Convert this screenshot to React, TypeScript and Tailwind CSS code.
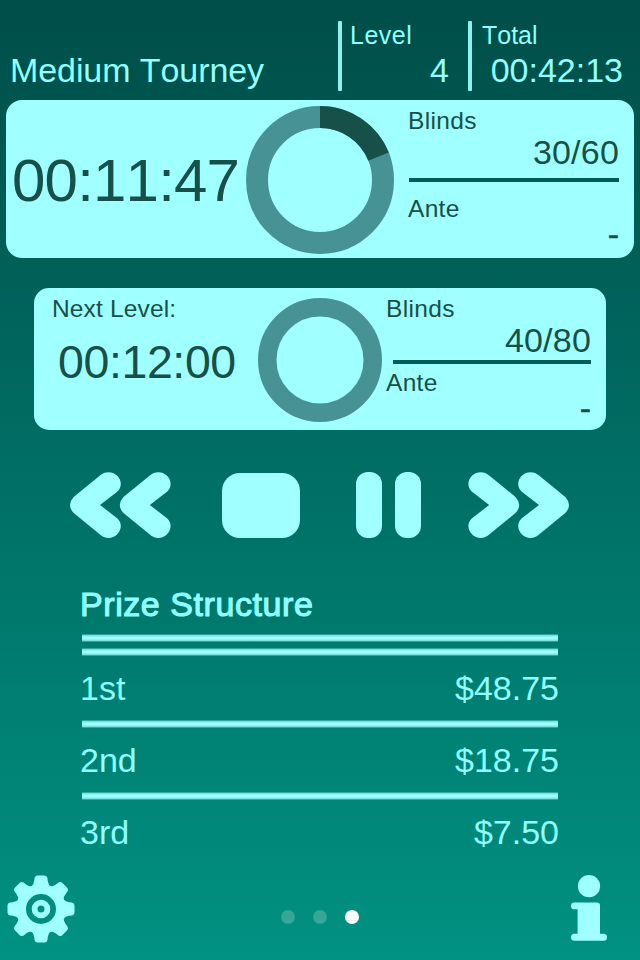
const SOFT_LINE =
  "bg-[linear-gradient(to_bottom,rgba(160,255,255,0.3)_0px,rgba(160,255,255,0.3)_1px,rgba(160,255,255,0.78)_1px,rgba(160,255,255,0.78)_2px,#a0ffff_3px,#a0ffff_5px,rgba(160,255,255,0.78)_6px,rgba(160,255,255,0.78)_7px,rgba(160,255,255,0.3)_7px)]";

function Donut({ size, thickness, progress }: { size: number; thickness: number; progress: number }) {
  const r = (size - thickness) / 2;
  const c = size / 2;
  const length = 2 * Math.PI * r;
  return (
    <svg width={size} height={size} className="block shrink-0" fill="none" strokeWidth={thickness}>
      <circle cx={c} cy={c} r={r} stroke="#469294" />
      {progress > 0 && (
        <circle
          cx={c}
          cy={c}
          r={r}
          stroke="#174f49"
          strokeDasharray={`${length * progress} ${length}`}
          transform={`rotate(-90 ${c} ${c})`}
        />
      )}
    </svg>
  );
}

const CHEVRON =
  "M30 3.5C34.500 -1 42.500 -1 47 3.500C52 8.500 52 15 47.500 19.500L30 33L47.500 46.500C52 51 52 57.500 47 62.500C42.500 67 34.500 67 30 62.500L3.700 41Q-3.700 33 3.700 25Z";

function Chevrons({ flip = false }: { flip?: boolean }) {
  return (
    <svg width="101" height="66" viewBox="0 0 101 66" fill="#a0ffff" className="block shrink-0">
      <g transform={flip ? "translate(101 0) scale(-1 1)" : undefined}>
        <path d={CHEVRON} />
        <path d={CHEVRON} transform="translate(49.8 0)" />
      </g>
    </svg>
  );
}

function Gear() {
  return (
    <svg width="68" height="68" viewBox="-34 -34 68 68" fill="#a0ffff" className="block">
      {[0, 45, 90, 135, 180, 225, 270, 315].map((a) => (
        <path
          key={a}
          transform={`rotate(${a})`}
          d="M-9.500 -22Q-7.200 -25 -6.800 -28L-6.400 -31Q-6 -33.500 -3.500 -33.500H3.500Q6 -33.500 6.400 -31L6.800 -28Q7.200 -25 9.500 -22Z"
        />
      ))}
      <path
        fillRule="evenodd"
        d="M-25 0A25 25 0 1 1 25 0A25 25 0 1 1 -25 0ZM-15 0A15 15 0 1 0 15 0A15 15 0 1 0 -15 0Z"
      />
      <circle r="6.400" fill="none" stroke="#a0ffff" strokeWidth="5.800" />
    </svg>
  );
}

function Info() {
  return (
    <svg width="36" height="66" viewBox="0 0 36 66" fill="#a0ffff" className="block">
      <circle cx="18" cy="11.200" r="11.100" />
      <path d="M3.400 27.500H26Q29 27.500 29 30.500V58.700H32.500A3.500 3.500 0 0 1 32.500 65.700H3.500A3.500 3.500 0 0 1 3.500 58.700H6.600V34.300H3.400A3.400 3.400 0 0 1 3.400 27.500Z" />
    </svg>
  );
}

const prizes = [
  { place: "1st", amount: "$48.75" },
  { place: "2nd", amount: "$18.75" },
  { place: "3rd", amount: "$7.50" },
];

export default function App() {
  return (
    <main className="flex h-[960px] w-[640px] flex-col overflow-hidden bg-linear-to-b from-[#004e49] to-[#009282] font-['Liberation_Sans',Arial,sans-serif] leading-none whitespace-nowrap text-[#92ffff] [font-kerning:none]">
      <header className="flex h-[100px] shrink-0">
        <h1 className="w-[338px] pt-[53px] pl-[10px] text-[34px] tracking-[-0.08px]">Medium Tourney</h1>
        <div className="mt-[21px] h-[70px] w-1 rounded-[1px] bg-[#8ff0ee]" />
        <div className="w-[126px] pt-[23px] pr-[19px] pl-[8px]">
          <div className="text-[25px] tracking-[0.5px]">Level</div>
          <div className="mt-[5px] text-right text-[34px]">4</div>
        </div>
        <div className="mt-[21px] h-[70px] w-1 rounded-[1px] bg-[#8ff0ee]" />
        <div className="grow pt-[23px] pr-[17px] pl-[10px]">
          <div className="text-[25px]">Total</div>
          <div className="mt-[5px] text-right text-[34px]">00:42:13</div>
        </div>
      </header>

      <section className="mx-[6px] flex h-[158px] shrink-0 rounded-[16px] bg-[#a0ffff] text-[#174f49]">
        <div className="w-[240px] pt-[51px] pl-[6px] text-[60px] tracking-[-0.8px]">00:11:47</div>
        <div className="pt-[6px]">
          <Donut size={148} thickness={22} progress={0.189} />
        </div>
        <div className="grow pr-[15px] pl-[15px]">
          <div className="mt-[9px] -ml-[1px] text-[24.5px] tracking-[0.35px]">Blinds</div>
          <div className="mt-[1.5px] text-right text-[34px] tracking-[0.2px]">30/60</div>
          <div className="mt-[9px] h-1 bg-[#005c55]" />
          <div className="mt-[15px] -ml-[1px] text-[24.5px] tracking-[0.3px]">Ante</div>
          <div className="mt-[-5px] text-right text-[34px] [-webkit-text-stroke:0.5px]">-</div>
        </div>
      </section>

      <section className="mx-[34px] mt-[30px] flex h-[142px] shrink-0 rounded-[15px] bg-[#a0ffff] text-[#174f49]">
        <div className="w-[224px] pt-[9px] pl-[17px]">
          <div className="pl-[1px] text-[24.5px] tracking-[0.15px]">Next Level:</div>
          <div className="mt-[17px] pl-[7px] text-[46.5px] tracking-[-0.4px]">00:12:00</div>
        </div>
        <div className="pt-[10px]">
          <Donut size={124} thickness={18.5} progress={0} />
        </div>
        <div className="grow pr-[15px] pl-[3px]">
          <div className="mt-[9px] ml-[1px] text-[24.5px] tracking-[0.35px]">Blinds</div>
          <div className="mt-[1.5px] text-right text-[34px] tracking-[0.2px]">40/80</div>
          <div className="mt-[3px] ml-[8px] h-1 bg-[#005c55]" />
          <div className="mt-[7px] ml-[1px] text-[24.5px] tracking-[0.3px]">Ante</div>
          <div className="mt-[-5px] text-right text-[34px] [-webkit-text-stroke:0.5px]">-</div>
        </div>
      </section>

      <nav className="mt-[42px] flex h-[66px] shrink-0 items-start pl-[70px]">
        <Chevrons />
        <div className="mt-[1px] ml-[51px] h-[65px] w-[78px] rounded-[18px] bg-[#a0ffff]" />
        <div className="ml-[56px] h-[66px] w-[26px] rounded-[12px] bg-[#a0ffff]" />
        <div className="ml-[13px] h-[66px] w-[26px] rounded-[12px] bg-[#a0ffff]" />
        <div className="ml-[47px]">
          <Chevrons flip />
        </div>
      </nav>

      <section className="mx-[80px] mt-[50px] h-[288px] shrink-0 text-[34px]">
        <h2 className="mt-[-1px] mb-[1px] h-[46px] font-normal tracking-[0.57px] [-webkit-text-stroke:1.1px]">Prize Structure</h2>
        {prizes.map((p, i) => (
          <div key={p.place} className="h-[72px] first-of-type:h-[86px]">
            {i === 0 && <div className={`mx-[2px] mb-[6px] h-2 ${SOFT_LINE}`} />}
            <div className={`mx-[2px] h-2 ${SOFT_LINE}`} />
            <div className="flex justify-between pt-[15px] pr-[1px]">
              <span>{p.place}</span>
              <span>{p.amount}</span>
            </div>
          </div>
        ))}
      </section>

      <footer className="mt-[-1px] flex h-[85px] shrink-0 pl-[7px]">
        <Gear />
        <div className="ml-[206px] flex gap-[18px] pt-[35px]">
          <div className="size-[14px] rounded-full bg-[#35a698]" />
          <div className="size-[14px] rounded-full bg-[#35a698]" />
          <div className="size-[14px] rounded-full bg-white" />
        </div>
        <div className="ml-[212px]">
          <Info />
        </div>
      </footer>
    </main>
  );
}
